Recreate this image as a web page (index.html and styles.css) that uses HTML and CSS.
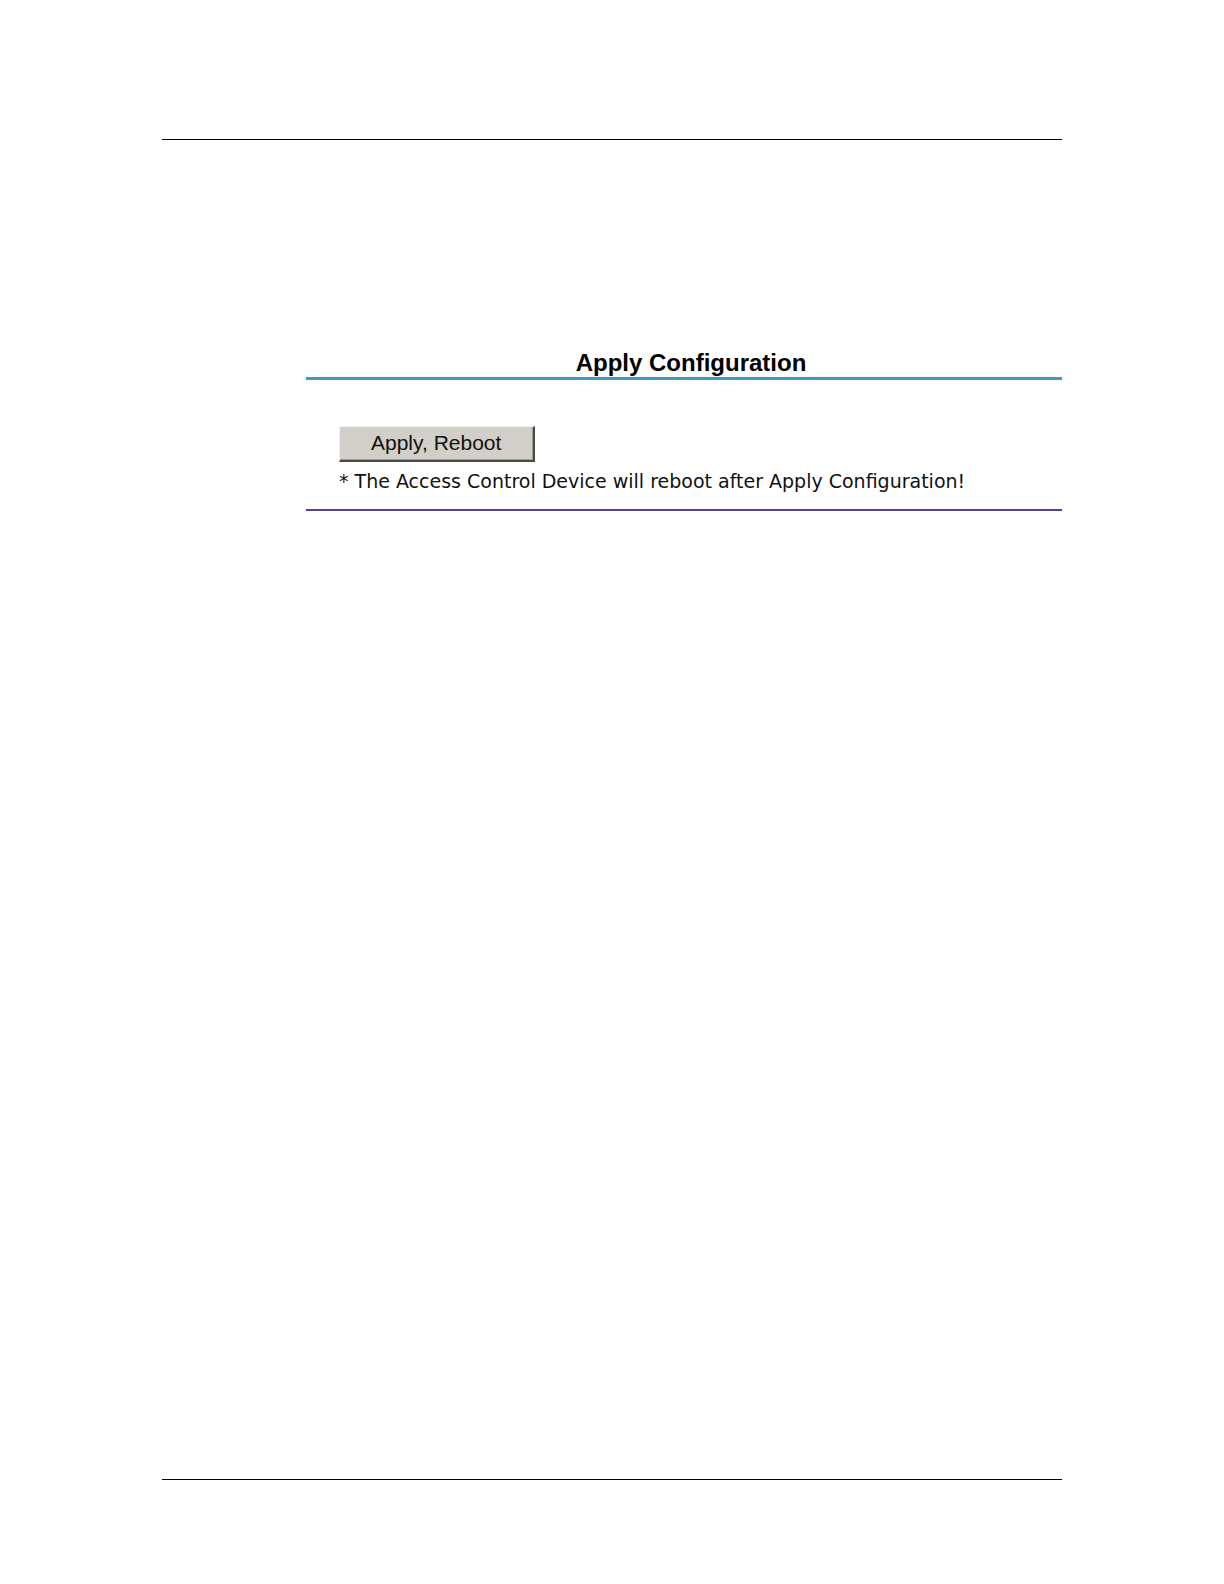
FILE: index.html
```html
<!DOCTYPE html>
<html lang="en">
<head>
    <meta charset="UTF-8">
    <meta name="viewport" content="width=device-width, initial-scale=1">
    <title>Apply Configuration</title>
    <link rel="stylesheet" href="styles.css">
</head>
<body>
    <div class="page">
        <main class="panel">
            <h1 class="panel-title">Apply Configuration</h1>
            <form class="panel-body">
                <button type="button" class="apply-btn" aria-describedby="rebootNote">Apply, Reboot</button>
                <p class="note" id="rebootNote">* The Access Control Device will reboot after Apply Configuration!</p>
            </form>
        </main>
    </div>
</body>
</html>
```

FILE: styles.css
```css
* {
    box-sizing: border-box;
}

body {
    margin: 0;
    min-height: 100vh;
    padding: 139px 162px 104px;
    display: flex;
    background: #fff;
    color: #000;
    font-family: "Liberation Sans", Arial, sans-serif;
}

/* Top and bottom page rules */
.page {
    flex: 1;
    min-width: 0;
    padding: 208px 0 64px 144px;
    border-top: 1px solid #000;
    border-bottom: 1px solid #000;
}

.panel {
    border-bottom: 2px solid #5c3d99;
}

.panel-title {
    margin: 0;
    padding-left: 14px;
    border-bottom: 3px solid #3f9bc4;
    font-size: 24px;
    font-weight: 700;
    line-height: 29px;
    text-align: center;
}

.panel-body {
    padding: 46px 33px 16px;
}

/* Raised bevel: light top-left, dark bottom-right */
.apply-btn {
    display: block;
    padding: 4px 32px 5px 31px;
    border: solid;
    border-width: 1px 2px 2px 1px;
    border-color: #f4f3f0 #4c4b48 #4c4b48 #f4f3f0;
    border-radius: 0;
    background: #d1cfc7;
    box-shadow: inset -1px -1px #9c9a94;
    color: #111;
    font-family: inherit;
    font-size: 21px;
    line-height: 24px;
}

.apply-btn:active {
    border-color: #4c4b48 #f4f3f0 #f4f3f0 #4c4b48;
    box-shadow: none;
}

.note {
    margin: 7px 0 0;
    color: #111;
    font-family: "DejaVu Sans", Verdana, sans-serif;
    font-size: 19px;
    line-height: 24px;
}
```
